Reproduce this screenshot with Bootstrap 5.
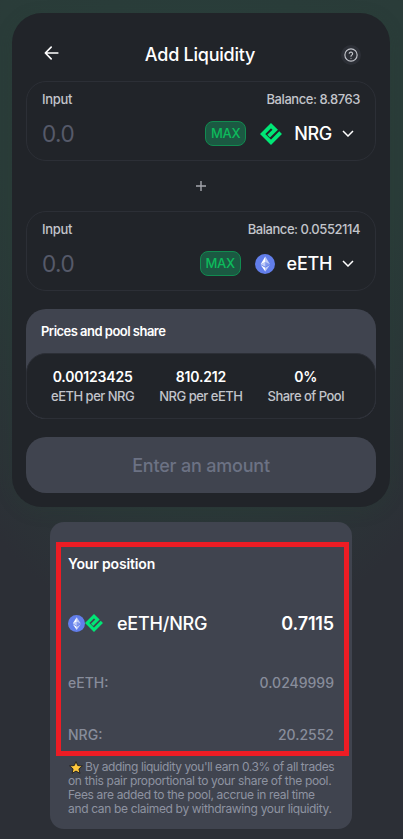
<!DOCTYPE html>
<html lang="en">
<head>
<meta charset="utf-8">
<meta name="viewport" content="width=device-width, initial-scale=1">
<title>Add Liquidity</title>
<link href="https://cdn.jsdelivr.net/npm/bootstrap@5.3.0/dist/css/bootstrap.min.css" rel="stylesheet">
<style>
html,body{height:839px;overflow:hidden}
body{font-family:Inter,sans-serif;color:#fff;line-height:1.2;background:radial-gradient(340px 560px at 50% 90px,#2a3e3b 0,#2a3c39 60%,#2c2f36 100%) #2c2f36;padding:13px 13px 0 12px}
.panel{background:#212429;border-radius:30px;height:494px;padding:0 14px;box-shadow:0 4px 16px rgba(38,62,52,.25)}
.head{height:68px;padding:15px 15px 0 16px}
.heading{font-size:18px;font-weight:500;letter-spacing:-.24px;padding-right:3px;padding-top:1px}
.help{width:20px;height:20px;background:#2c2f36}
.entry{height:80px;border:1px solid #2c2f36;border-radius:20px;padding:9px 15px 0}
.small-text{font-size:13px;font-weight:500;color:#c3c5cb;letter-spacing:-.45px;line-height:16px}
.small-text span:first-child{letter-spacing:-.3px}
.amount{font-size:22.5px;color:#565a69;letter-spacing:-.5px;line-height:29px}
.max{width:41px;height:25px;border:1px solid #118b50;border-radius:8px;background:#1b5942;color:#0dbb5c;font-size:13px;font-weight:500;letter-spacing:-.3px}
.token{font-size:18px;font-weight:500;letter-spacing:-.3px}
.chev{margin:0 6px 0 10px}
.icon-gap{margin-left:14px}
.plus{height:50px}
.prices{height:110px;margin-top:18px;background:#40444f;border-radius:20px}
.prices-title{height:44px;padding:2px 0 0 15px;font-size:13px;font-weight:600;letter-spacing:-.52px}
.rates{height:66px;background:#212429;border:1px solid #2c2f36;border-radius:20px;padding:13px 0 0 24px;gap:25px}
.rate-value{font-size:14px;font-weight:600;line-height:20px;letter-spacing:-.2px}
.rate-name{font-size:13px;font-weight:500;color:#c3c5cb;line-height:18px;letter-spacing:-.5px}
.submit,.submit:disabled{height:56px;margin-top:18px;background:#40444f;border:0;border-radius:20px;color:#6c7284;font-size:18px;font-weight:500;opacity:1;letter-spacing:-.2px}
.position{width:302px;height:307px;margin:15px auto 0 38px;background:#40444f;border-radius:14px;padding:20px 3px 0 6px}
.outline{height:214px;border:5px solid #ed1c24;padding:8px 10px 0 7px}
.pos-title{font-size:14px;font-weight:600;line-height:18px;letter-spacing:-.15px}
.pair{font-size:18px;font-weight:600;height:30px;margin-top:35px;letter-spacing:-.15px}
.pair-name,.pair-value{padding-top:1px}
.pair-name{font-weight:500;margin-left:14px;letter-spacing:-.22px}
.line{font-size:14px;font-weight:500;color:#888d9b;line-height:18px}
.line-a{margin-top:36px}
.line-b{margin-top:34px}
.note{font-size:12px;font-weight:400;color:#8e93a1;line-height:14px;padding:4px 0 0 12px;white-space:nowrap;letter-spacing:-.34px}
.note div:first-child{letter-spacing:-.42px;padding-left:1px}
svg{display:block;flex:none}
.note svg{display:inline-block;vertical-align:-3px;margin:-2px 2px 0 0}
</style>
<script src="https://cdn.jsdelivr.net/npm/bootstrap@5.3.0/dist/js/bootstrap.bundle.min.js"></script>
</head>
<body>
<svg width="0" height="0" class="position-absolute">
<symbol id="eth" viewBox="0 0 32 32"><circle cx="16" cy="16" r="16" fill="#627eea"/><g fill="#fff"><path fill-opacity=".6" d="M16.5 4v8.87l7.5 3.35z"/><path d="M16.5 4 9 16.22l7.5-3.35z"/><path fill-opacity=".6" d="M16.5 21.97V28L24 17.62z"/><path d="M16.5 28v-6.03L9 17.62z"/><path fill-opacity=".2" d="m16.5 20.57 7.5-4.35-7.5-3.35z"/><path fill-opacity=".6" d="m9 16.22 7.5 4.35v-7.7z"/></g></symbol>
<symbol id="nrg" viewBox="0 0 22 22"><path fill="none" stroke="#00e676" stroke-width="3.8" d="M8.6 13.2 15.2 6.8 11 2.7 2.7 11 11 19.3 20.6 9.7"/></symbol>
<symbol id="chev" viewBox="0 0 12 7"><path d="m1 1 5 5 5-5" fill="none" stroke="#fff" stroke-width="1.5"/></symbol>
</svg>
<main class="panel">
<header class="head d-flex align-items-center justify-content-between">
<svg width="20" height="20" viewBox="0 0 24 24" fill="none" stroke="#fff" stroke-width="2" stroke-linecap="round" stroke-linejoin="round" class="mb-1"><path d="M19 12H4M11 5l-7 7 7 7"/></svg>
<div class="heading">Add Liquidity</div>
<div class="help rounded-circle d-flex align-items-center justify-content-center"><svg width="14" height="14" viewBox="0 0 24 24" fill="none" stroke="#c3c5cb" stroke-width="2" stroke-linecap="round"><circle cx="12" cy="12" r="10.5"/><path d="M9 9a3 3 0 0 1 5.8 1c0 2-2.8 2.4-2.8 4M12 17.5v.1"/></svg></div>
</header>
<section class="entry">
<div class="small-text d-flex justify-content-between"><span>Input</span><span>Balance: 8.8763</span></div>
<div class="d-flex align-items-center mt-2 pt-1"><span class="amount me-auto">0.0</span><span class="max d-flex align-items-center justify-content-center">MAX</span><svg class="icon-gap" width="22" height="22"><use href="#nrg"/></svg><span class="token ms-2 ps-1">NRG</span><svg class="chev" width="12" height="7"><use href="#chev"/></svg></div>
</section>
<div class="plus d-flex align-items-center justify-content-center"><svg width="10" height="10" viewBox="0 0 10 10"><path d="M5 0v10M0 5h10" stroke="#a5a7ad" stroke-width="1.4"/></svg></div>
<section class="entry">
<div class="small-text d-flex justify-content-between"><span>Input</span><span>Balance: 0.0552114</span></div>
<div class="d-flex align-items-center mt-2 pt-1"><span class="amount me-auto">0.0</span><span class="max d-flex align-items-center justify-content-center">MAX</span><svg class="icon-gap" width="20" height="20"><use href="#eth"/></svg><span class="token ms-2 ps-1">eETH</span><svg class="chev" width="12" height="7"><use href="#chev"/></svg></div>
</section>
<section class="prices">
<div class="prices-title d-flex align-items-center">Prices and pool share</div>
<div class="rates d-flex text-center">
<div><div class="rate-value">0.00123425</div><div class="rate-name">eETH per NRG</div></div>
<div><div class="rate-value">810.212</div><div class="rate-name">NRG per eETH</div></div>
<div><div class="rate-value">0%</div><div class="rate-name">Share of Pool</div></div>
</div>
</section>
<button class="submit btn w-100" disabled>Enter an amount</button>
</main>
<section class="position">
<div class="outline">
<div class="pos-title">Your position</div>
<div class="pair d-flex align-items-center"><svg width="17" height="17"><use href="#eth"/></svg><svg width="18" height="18"><use href="#nrg"/></svg><span class="pair-name">eETH/NRG</span><span class="pair-value ms-auto">0.7115</span></div>
<div class="line line-a d-flex justify-content-between"><span>eETH:</span><span>0.0249999</span></div>
<div class="line line-b d-flex justify-content-between"><span>NRG:</span><span>20.2552</span></div>
</div>
<div class="note"><div><svg width="14" height="13" viewBox="0 0 13 12"><path d="m6.5 .6 1.6 3.6 4.3.4-3.2 2.7.9 4.1-3.6-2.1-3.6 2.1.9-4.1L.6 4.6l4.3-.4z" fill="#ffc83d" stroke="#18191c" stroke-width=".8" stroke-linejoin="round"/></svg>By adding liquidity you'll earn 0.3% of all trades</div><div>on this pair proportional to your share of the pool.</div><div>Fees are added to the pool, accrue in real time</div><div>and can be claimed by withdrawing your liquidity.</div></div>
</section>
</body>
</html>
